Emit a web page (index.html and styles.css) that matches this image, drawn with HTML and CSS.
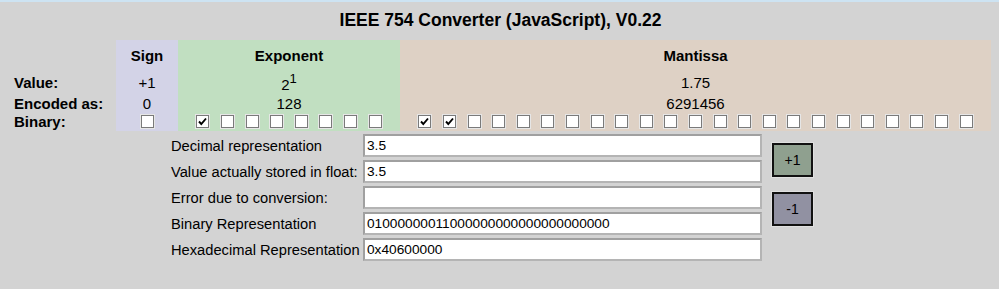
FILE: index.html
```html
<!DOCTYPE html>
<html lang="en">
<head>
    <meta charset="UTF-8">
    <title>IEEE 754 Converter</title>
    <link rel="stylesheet" href="styles.css">
</head>
<body>

    <h1 class="title">IEEE 754 Converter (JavaScript), V0.22</h1>

    <div class="bits">
        <div class="cell lbl"></div>
        <div class="cell head sign">Sign</div>
        <div class="cell head expo">Exponent</div>
        <div class="cell head mant">Mantissa</div>

        <div class="cell lbl">Value:</div>
        <div class="cell sign">+1</div>
        <div class="cell expo"><span class="pow">2<sup>1</sup></span></div>
        <div class="cell mant">1.75</div>

        <div class="cell lbl">Encoded as:</div>
        <div class="cell sign">0</div>
        <div class="cell expo">128</div>
        <div class="cell mant">6291456</div>

        <div class="cell lbl">Binary:</div>
        <div class="cell sign boxes" id="signBits"></div>
        <div class="cell expo boxes" id="expoBits"></div>
        <div class="cell mant boxes" id="mantBits"></div>
    </div>

    <div class="form">
        <label class="flabel">Decimal representation</label>
        <input class="finput" type="text" value="3.5">
        <button class="step plus">+1</button>

        <label class="flabel">Value actually stored in float:</label>
        <input class="finput" type="text" value="3.5">

        <label class="flabel">Error due to conversion:</label>
        <input class="finput" type="text" value="">
        <button class="step minus">-1</button>

        <label class="flabel">Binary Representation</label>
        <input class="finput" type="text" value="01000000011000000000000000000000">

        <label class="flabel">Hexadecimal Representation</label>
        <input class="finput" type="text" value="0x40600000">
    </div>

<script>
const bits = '01000000011000000000000000000000';
const tick = '<svg viewBox="0 0 11 11" width="11" height="11"><path d="M2 5.5 L4.3 8 L9 2.5" fill="none" stroke="#000" stroke-width="1.9"/></svg>';

function fill(id, from, to) {
  const el = document.getElementById(id);
  for (let i = from; i < to; i++) {
    const b = document.createElement('span');
    b.className = 'box';
    if (bits[i] === '1') b.innerHTML = tick;
    el.appendChild(b);
  }
}

fill('signBits', 0, 1);
fill('expoBits', 1, 9);
fill('mantBits', 9, 32);
</script>

</body>
</html>
```

FILE: styles.css
```css
body {
    background-color: #d3d3d3;
    font-family: "Liberation Sans", Arial, sans-serif;
    font-size: 15px;
    color: #000;
    margin: 0;
    padding: 0 8px 0 10px;
    border-top: 2px solid #cde3f2;
    height: 287px;
}

.title {
    font-size: 17.5px;
    font-weight: bold;
    text-align: center;
    margin: 0;
    padding: 8px 0 0 0;
    height: 30px;
    line-height: 20px;
}

.bits {
    display: grid;
    grid-template-columns: 106px 62px 222px 591px;
    grid-template-rows: 30px 24px 18px 19px;
}

.cell {
    display: flex;
    align-items: center;
    justify-content: center;
}

.lbl {
    justify-content: flex-start;
    font-weight: bold;
    padding-left: 4px;
}

.head {
    font-weight: bold;
}

.sign { background-color: #d3d3e7; }
.expo { background-color: #c1dfc1; }
.mant { background-color: #ded1c5; }

.pow {
    padding-top: 5px;
}

.pow sup {
    font-size: 13px;
    vertical-align: 7px;
    line-height: 0;
}

.boxes {
    gap: 11.6px;
    padding-bottom: 1px;
}

.box {
    width: 11px;
    height: 11px;
    background-color: #fff;
    border: 1px solid #7a7a7a;
    box-shadow: 0 0 0 1px #e6e6e6;
    display: flex;
    align-items: center;
    justify-content: center;
}

.form {
    display: grid;
    grid-template-columns: 194px 399px 51px;
    grid-auto-rows: 23px;
    row-gap: 3px;
    margin: 3px 0 0 159px;
}

.flabel {
    display: flex;
    align-items: center;
    padding-left: 2px;
    font-size: 14.7px;
    white-space: nowrap;
}

.finput {
    width: 100%;
    height: 23px;
    box-sizing: border-box;
    border: 2px solid #a0a0a0;
    border-right-color: #b4b4b4;
    border-bottom-color: #b4b4b4;
    background: #fff;
    font-family: "Liberation Sans", Arial, sans-serif;
    font-size: 13.7px;
    padding: 0 2px;
    margin: 0;
}

.step {
    grid-column: 3;
    grid-row: span 2;
    justify-self: end;
    align-self: center;
    width: 41px;
    height: 34px;
    border: 2px solid #111;
    box-shadow: 0 0 0 1px #e0e0e0;
    font-family: "Liberation Sans", Arial, sans-serif;
    font-size: 14px;
    color: #000;
    padding: 0;
    margin-top: 3px;
}

.plus { background-color: #8fa08f; }
.minus { background-color: #9191a2; margin-top: -3px; }
```
